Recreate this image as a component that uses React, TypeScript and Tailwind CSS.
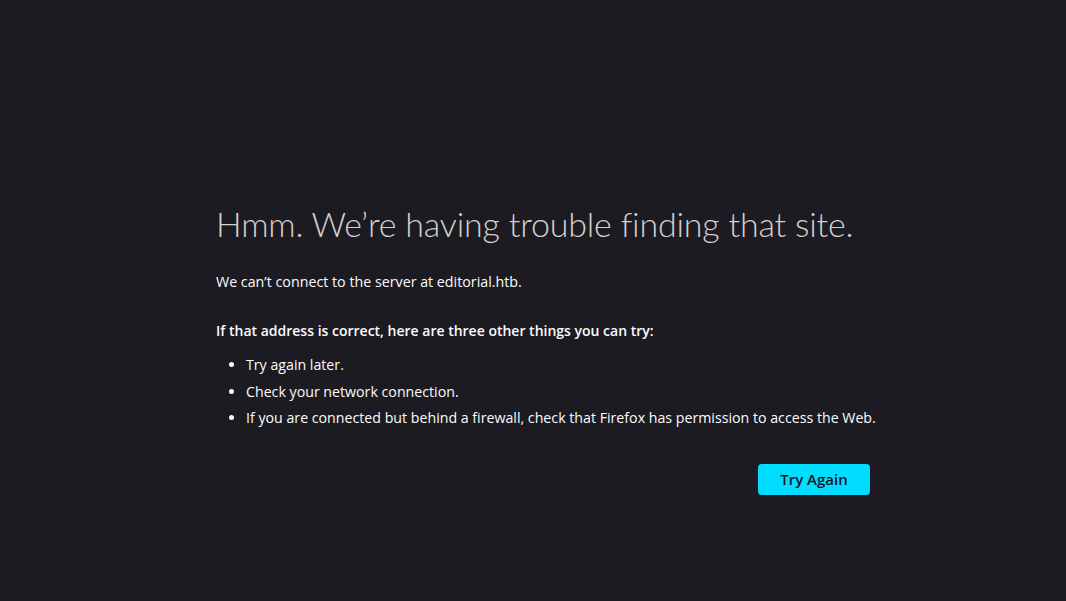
import React from "react";

export default function App() {
  return (
    <div
      className="min-h-[601px] w-full bg-[#1c1b22] text-[#fbfbfe]"
      style={{ fontFamily: '"Open Sans", "Liberation Sans", sans-serif' }}
    >
      <div className="flex justify-center pl-[20px] pt-[200px]">
        <div className="w-[654px]">
          <h1 className="text-[34px] font-light leading-[48px] text-[#d6d0cc] tracking-[-0.2px]" style={{ fontFamily: 'Lato, "Open Sans", sans-serif' }}>
            Hmm. We’re having trouble finding that site.
          </h1>
          <p className="mt-[22px] text-[14.25px] leading-[24px]">
            We can’t connect to the server at editorial.htb.
          </p>
          <p className="mt-[25px] text-[14px] font-semibold leading-[24px]">
            If that address is correct, here are three other things you can try:
          </p>
          <ul className="mt-[9px] list-disc whitespace-nowrap pl-[30px] text-[14.2px] leading-[26.5px]">
            <li>Try again later.</li>
            <li>Check your network connection.</li>
            <li>If you are connected but behind a firewall, check that Firefox has permission to access the Web.</li>
          </ul>
          <div className="mt-[32px] flex justify-end">
            <button className="h-[31px] w-[112px] rounded-[4px] bg-[#00ddff] text-[15px] font-semibold text-[#15141a]">
              Try Again
            </button>
          </div>
        </div>
      </div>
    </div>
  );
}
